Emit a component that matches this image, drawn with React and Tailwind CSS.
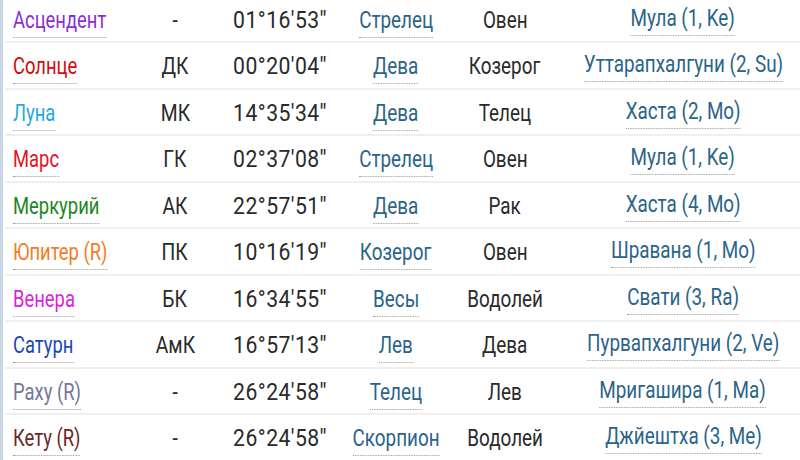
import React from "react";

const rows = [
  { name: "Асцендент", color: "text-[#8b2fd3]", k: "-", deg: "01°16'53''", sign: "Стрелец", nav: "Овен", nak: "Мула (1, Ke)" },
  { name: "Солнце", color: "text-[#d20a0a]", k: "ДК", deg: "00°20'04''", sign: "Дева", nav: "Козерог", nak: "Уттарапхалгуни (2, Su)" },
  { name: "Луна", color: "text-[#27a8df]", k: "МК", deg: "14°35'34''", sign: "Дева", nav: "Телец", nak: "Хаста (2, Mo)" },
  { name: "Марс", color: "text-[#e5141b]", k: "ГК", deg: "02°37'08''", sign: "Стрелец", nav: "Овен", nak: "Мула (1, Ke)" },
  { name: "Меркурий", color: "text-[#1d861d]", k: "АК", deg: "22°57'51''", sign: "Дева", nav: "Рак", nak: "Хаста (4, Mo)" },
  { name: "Юпитер (R)", color: "text-[#f47b25]", k: "ПК", deg: "10°16'19''", sign: "Козерог", nav: "Овен", nak: "Шравана (1, Mo)" },
  { name: "Венера", color: "text-[#de1fde]", k: "БК", deg: "16°34'55''", sign: "Весы", nav: "Водолей", nak: "Свати (3, Ra)" },
  { name: "Сатурн", color: "text-[#1b47b8]", k: "АмК", deg: "16°57'13''", sign: "Лев", nav: "Дева", nak: "Пурвапхалгуни (2, Ve)" },
  { name: "Раху (R)", color: "text-[#75759a]", k: "-", deg: "26°24'58''", sign: "Телец", nav: "Лев", nak: "Мригашира (1, Ma)" },
  { name: "Кету (R)", color: "text-[#6e2629]", k: "-", deg: "26°24'58''", sign: "Скорпион", nav: "Водолей", nak: "Джйештха (3, Me)" },
];

const base = "inline-block whitespace-nowrap leading-[26px]";
const dotted = "border-b border-dotted border-[#9a9a9a] pb-[3px]";

export default function App() {
  return (
    <div
      className="w-[800px] h-[460px] overflow-hidden bg-white flex"
      style={{ fontFamily: 'Roboto, "Liberation Sans", sans-serif' }}
    >
      <div className="w-[3px] shrink-0 bg-[#c8d5e2]" />
      <div className="flex-1 flex flex-col -mt-[3.5px] text-[23px] text-[#2a2a2a]">
        {rows.map((r, i) => (
          <div
            key={i}
            className="h-[46.5px] shrink-0 grid grid-cols-[117px_90px_120px_112px_106px_242px] items-center border-b-2 border-[#efefef] ml-[2px] pl-[8px] pt-[4px]"
          >
            <div className="text-left whitespace-nowrap">
              <span className={`${base} ${dotted} scale-x-[0.8] origin-left ${r.color}`}>{r.name}</span>
            </div>
            <div className="text-center whitespace-nowrap">
              <span className={`${base} scale-x-[0.84] origin-center pb-[3px]`}>{r.k}</span>
            </div>
            <div className="text-center whitespace-nowrap">
              <span className={`${base} scale-x-[0.92] origin-center pb-[3px] tracking-[0.5px]`}>{r.deg}</span>
            </div>
            <div className="text-center whitespace-nowrap">
              <span className={`${base} ${dotted} scale-x-[0.82] origin-center text-[#2a6489]`}>{r.sign}</span>
            </div>
            <div className="text-center whitespace-nowrap">
              <span className={`${base} scale-x-[0.82] origin-center pb-[3px]`}>{r.nav}</span>
            </div>
            <div className="whitespace-nowrap pl-[8px] flex justify-center">
              <span className={`${base} ${dotted} scale-x-[0.82] origin-center text-[#2a6489]`}>{r.nak}</span>
            </div>
          </div>
        ))}
      </div>
    </div>
  );
}
